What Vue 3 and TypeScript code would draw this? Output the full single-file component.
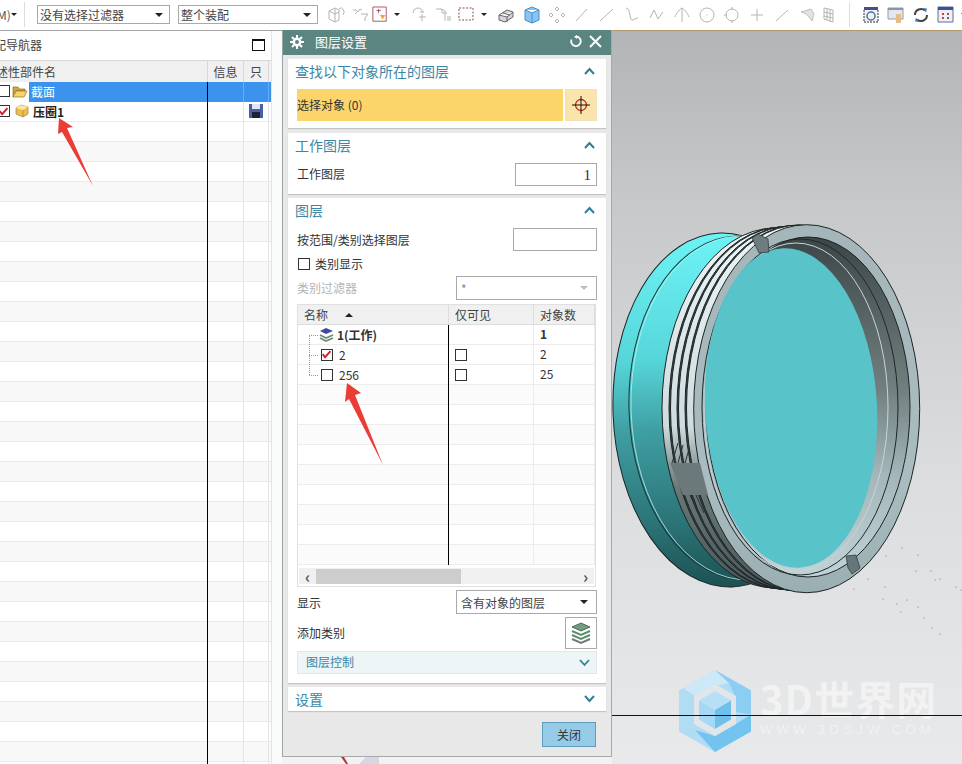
<script setup lang="ts">
const tools = [
  { w: 25, c: '#b4b4b4', d: 'M2 6l6-3 4 2v10l-4 2-6-3zM8 3v14M2 6l6 3 4-2M12 4a3 4 0 1 1 4 6' },
  { w: 24, c: '#b4b4b4', d: 'M2 5h3l2 2 2-3 2 1M10 9h7l-3 4v3M4 9l3-3' },
  { w: 16, c: '#a04c55', d: 'M1 1h15v16H1zM5 5h5M7.5 3v5', extra: 'filter' },
  { w: 17, c: '#444', d: '', caret: true },
  { w: 27, c: '#b4b4b4', d: 'M3 8a5 5 0 0 1 9-3l1 2M10 7h4M12 9v7M9 12h7' },
  { w: 23, c: '#b4b4b4', d: 'M1 4h6l3 2v10M7 4v4h5M13 11v5M15 11v5' },
  { w: 19, c: '#8a4a55', d: 'M3 3h14v12H3z', dash: true },
  { w: 20, c: '#444', d: '', caret: true },
  { w: 24, c: '#666', d: 'M2 10l8-5 6 2v5l-8 5-6-2zM2 10l8 2 6-5M10 12v5M6 8l7 2', fill: '#d8d4dc' },
  { w: 26, c: '#3e8fd8', d: 'M3 5l7-3 7 3v10l-7 3-7-3zM3 5l7 3 7-3M10 8v10', fill: '#8cc4f0' },
  { w: 25, c: '#b4b4b4', d: 'M9 2l2 2-2 2-2-2zM3 8l2 2-2 2-2-2zM15 8l2 2-2 2-2-2zM9 14l2 2-2 2-2-2z' },
  { w: 24, c: '#b4b4b4', d: 'M4 16L15 4' },
  { w: 26, c: '#b4b4b4', d: 'M3 16L16 4' },
  { w: 25, c: '#b4b4b4', d: 'M3 3c5 0 3 12 6 12s3-2 6-2' },
  { w: 26, c: '#b4b4b4', d: 'M2 13l4-8 4 9 5-7' },
  { w: 24, c: '#b4b4b4', d: 'M9 3v14M2 12c2-5 5-8 7-9 2 1 5 4 7 9' },
  { w: 26, c: '#b4b4b4', d: 'M2 10a7 7 0 1 0 14 0a7 7 0 1 0-14 0M8.500 10h1' },
  { w: 24, c: '#b4b4b4', d: 'M3 10a6 6 0 1 0 12 0a6 6 0 1 0-12 0M9 2v3M9 15v3M1 10h3' },
  { w: 26, c: '#b4b4b4', d: 'M9 4v12M3 10h12' },
  { w: 24, c: '#b4b4b4', d: 'M3 16L15 5' },
  { w: 25, c: '#c0c0c0', d: 'M3 7l10-3 3 5-2 7C10 10 7 8 3 7z', fill: '#e2e2e2' },
  { w: 20, c: '#b4b4b4', d: 'M4 3l9 2v12l-9-3zM4 7l9 2M4 11l9 2M7 4v11M10 4.500v12' }
]

const navRows = Array.from({ length: 33 })
const layerRows = [
  { name: '2', on: true, count: '2' },
  { name: '256', on: false, count: '25' }
]
const emptyLayerRows = Array.from({ length: 9 })

// specks left over from the tessellated part, lower right of the viewport
const specks = [
  [902, 548], [918, 555], [886, 556], [931, 571], [916, 571], [940, 579], [868, 579],
  [935, 580], [885, 587], [956, 587], [961, 590], [854, 589], [883, 599], [907, 600],
  [897, 604], [918, 607], [901, 612], [924, 618], [932, 628], [940, 634]
]
</script>

<template>
  <div class="page">
    <header class="toolbar">
      <span class="menu-stub">M)</span>
      <span class="caret small"></span>
      <span class="tool-sep first"></span>
      <div class="combo tb-a"><span>没有选择过滤器</span><i class="caret"></i></div>
      <div class="combo tb-b"><span>整个装配</span><i class="caret"></i></div>
      <div class="tools">
        <template v-for="(t, i) in tools" :key="i">
          <span class="tool" :style="{ width: t.w + 'px' }">
            <i v-if="t.caret" class="caret small"></i>
            <svg v-else width="18" height="20" viewBox="0 0 18 20">
              <path :d="t.d" :stroke="t.c" :fill="t.fill || 'none'" :stroke-dasharray="t.dash ? '2 1.500' : undefined" stroke-width="1" />
              <path v-if="t.extra" d="M9 10h6l-3 5z" fill="#e6a83c" />
            </svg>
          </span>
        </template>
      </div>
      <span class="tool-sep"></span>
      <div class="tools">
        <span class="tool wide">
          <svg width="20" height="20" viewBox="0 0 20 20">
            <path d="M3 2h14v3H3z" fill="#3f4f8f" />
            <path d="M3 5v12h14V5" fill="#eef1f6" stroke="#333" stroke-dasharray="2 1" />
            <circle cx="10" cy="11" r="4" fill="none" stroke="#55708f" stroke-width="1.500" />
          </svg>
        </span>
        <span class="tool wide">
          <svg width="20" height="20" viewBox="0 0 20 20">
            <path d="M2 3h15v11H2z" fill="#e3e7ee" stroke="#9a9a9a" />
            <path d="M2 3h15v2H2z" fill="#8d93a5" />
            <path d="M10 9h5v9h-5z" fill="#e3bd8a" />
          </svg>
        </span>
        <span class="tool wide">
          <svg width="20" height="20" viewBox="0 0 20 20">
            <path d="M4 10a6 6 0 0 1 10-4.500M16 10a6 6 0 0 1-10 4.500" fill="none" stroke="#444" stroke-width="2" />
            <path d="M12 3l4 .5-1 4z" fill="#3c7fc0" />
            <path d="M8 17l-4-.5 1-4z" fill="#3c7fc0" />
          </svg>
        </span>
        <span class="tool wide">
          <svg width="20" height="20" viewBox="0 0 20 20">
            <path d="M2 2h15v15H2z" fill="#eef0f7" stroke="#5b6fa5" />
            <path d="M2 2h15v3H2z" fill="#3f4f8f" />
            <path d="M6 8h2v2H6zM11 8h2v2h-2zM6 12h2v2H6zM11 12h2v2h-2z" fill="#c9413a" />
          </svg>
        </span>
        <i class="caret small tail"></i>
      </div>
    </header>

    <div class="workspace">
      <aside class="nav-wrap">
        <div class="nav">
          <div class="nav-title">
            <span class="nav-name">配导航器</span>
            <span class="max-btn"></span>
          </div>
          <div class="nav-head nav-grid">
            <span class="clip-name">述性部件名</span>
            <span>信息</span>
            <span>只</span>
            <span></span>
          </div>
          <div class="nav-row nav-grid selected">
            <div class="first-col">
              <span class="check cut"></span>
              <svg class="folder" width="16" height="14" viewBox="0 0 16 14">
                <path d="M1 3h5l1 2h6v2H4l-3 6z" fill="#d5a530" stroke="#8f7020" stroke-width=".7" />
                <path d="M1 13l3-6h11l-3 6z" fill="#f6d568" stroke="#8f7020" stroke-width=".7" />
              </svg>
              <span class="sel-name">截面</span>
            </div>
            <span class="sel-fill"></span><span class="sel-fill"></span><span class="sel-end"></span>
          </div>
          <div class="nav-row nav-grid">
            <div class="first-col">
              <span class="check cut">
                <svg width="13" height="11" viewBox="0 0 13 11"><path d="M1 5l3 4 7-8" fill="none" stroke="#c8202c" stroke-width="2.400" /></svg>
              </span>
              <svg class="cube" width="14" height="14" viewBox="0 0 14 14">
                <path d="M1 4l5-3 7 2v7l-5 3-7-3z" fill="#e9bd50" stroke="#a68432" stroke-width=".7" />
                <path d="M1 4l7 2 5-3-7-2z" fill="#f9e6a6" />
                <path d="M8 6v7" stroke="#a68432" stroke-width=".7" />
              </svg>
              <b class="part-name">压圈1</b>
            </div>
            <span></span>
            <span class="save-cell">
              <svg width="14" height="14" viewBox="0 0 14 14">
                <path d="M0 0h14v14H0z" fill="#4a5fa0" />
                <path d="M3 0h8v5H3z" fill="#dfe6f5" />
                <path d="M3 8h8v6H3z" fill="#1b2138" />
              </svg>
            </span>
            <span></span>
          </div>
          <div v-for="(_, i) in navRows" :key="i" class="nav-row nav-grid" :class="{ alt: i % 2 === 1 }">
            <div class="first-col"></div><span></span><span></span><span></span>
          </div>
        </div>
      </aside>

      <section class="dialog-wrap">
        <div class="dialog">
          <div class="dlg-title">
            <svg width="14" height="14" viewBox="0 0 14 14">
              <path d="M7 2.500a4.500 4.500 0 1 0 0 9a4.500 4.500 0 1 0 0-9zM7 5a2 2 0 1 1 0 4a2 2 0 1 1 0-4z" fill="#fff" fill-rule="evenodd" />
              <path d="M7 0v3M7 11v3M0 7h3M11 7h3M2 2l2 2M10 10l2 2M12 2l-2 2M2 12l2-2" stroke="#fff" stroke-width="2" />
            </svg>
            <span class="dlg-name">图层设置</span>
            <svg class="reset" width="13" height="13" viewBox="0 0 13 13">
              <path d="M7 1.500a4.800 4.800 0 1 1-4.500 3" fill="none" stroke="#fff" stroke-width="1.800" />
              <path d="M8 0v4L5 1.800z" fill="#fff" />
            </svg>
            <svg width="13" height="13" viewBox="0 0 13 13">
              <path d="M1 1l11 11M12 1L1 12" stroke="#fff" stroke-width="2" />
            </svg>
          </div>

          <div class="dlg-body">
            <div class="panel first-panel">
              <div class="panel-head">
                <span>查找以下对象所在的图层</span>
                <svg class="chev" width="11" height="8" viewBox="0 0 11 8"><path d="M1 7l4.500-5L10 7" fill="none" stroke="#2f7f96" stroke-width="2" /></svg>
              </div>
              <div class="pick-row">
                <div class="pick-label">选择对象 (0)</div>
                <div class="pick-btn">
                  <svg width="20" height="20" viewBox="0 0 20 20">
                    <circle cx="10" cy="10" r="5.500" fill="none" stroke="#c0281c" stroke-width="1.300" />
                    <path d="M10 1v18M1 10h18" stroke="#111" stroke-width="1" />
                  </svg>
                </div>
              </div>
            </div>

            <div class="panel work-panel">
              <div class="panel-head">
                <span>工作图层</span>
                <svg class="chev" width="11" height="8" viewBox="0 0 11 8"><path d="M1 7l4.500-5L10 7" fill="none" stroke="#2f7f96" stroke-width="2" /></svg>
              </div>
              <div class="form-row">
                <span class="lift">工作图层</span>
                <div class="input work-input">1</div>
              </div>
            </div>

            <div class="panel layer-panel">
              <div class="panel-head">
                <span>图层</span>
                <svg class="chev" width="11" height="8" viewBox="0 0 11 8"><path d="M1 7l4.500-5L10 7" fill="none" stroke="#2f7f96" stroke-width="2" /></svg>
              </div>
              <div class="form-row range-row">
                <span>按范围/类别选择图层</span>
                <div class="input range-input"></div>
              </div>
              <label class="check-row"><span class="check"></span>类别显示</label>
              <div class="form-row filter-row">
                <span class="muted lift">类别过滤器</span>
                <div class="combo dlg-combo disabled"><span>*</span><i class="caret"></i></div>
              </div>

              <div class="layer-table">
                <div class="lt-head lt-grid">
                  <span class="lt-name">名称<i class="sort"></i></span>
                  <span>仅可见</span>
                  <span>对象数</span>
                </div>
                <div class="lt-rows">
                  <span class="tree-v"></span>
                  <span class="tree-h h1"></span>
                  <span class="tree-h h2"></span>
                  <span class="tree-h h3"></span>
                  <div class="lt-row lt-grid">
                    <div class="lt-first">
                      <svg class="layers-ico" width="17" height="16" viewBox="0 0 17 16">
                        <path d="M2 4l6-3 7 3-7 3z" fill="#3d4d9a" />
                        <path d="M2 8l6 3 7-3M2 11l6 3 7-3" fill="none" stroke="#708a78" stroke-width="1.800" />
                      </svg>
                      <b>1(工作)</b>
                    </div>
                    <span></span>
                    <b class="lt-count">1</b>
                  </div>
                  <div v-for="r in layerRows" :key="r.name" class="lt-row lt-grid">
                    <div class="lt-first item">
                      <span class="check">
                        <svg v-if="r.on" width="13" height="11" viewBox="0 0 13 11"><path d="M1 5l3 4 7-8" fill="none" stroke="#c8202c" stroke-width="2.400" /></svg>
                      </span>
                      <span>{{ r.name }}</span>
                    </div>
                    <span class="vis-cell"><span class="check"></span></span>
                    <span class="lt-count">{{ r.count }}</span>
                  </div>
                  <div v-for="(_, i) in emptyLayerRows" :key="i" class="lt-row lt-grid" :class="{ alt: i % 2 === 0 }">
                    <div class="lt-first"></div><span></span><span></span>
                  </div>
                </div>
                <div class="hscroll">
                  <span class="arrow">‹</span>
                  <span class="thumb"></span>
                  <span class="arrow end">›</span>
                </div>
              </div>

              <div class="form-row show-row">
                <span>显示</span>
                <div class="combo dlg-combo"><span>含有对象的图层</span><i class="caret"></i></div>
              </div>
              <div class="form-row add-row">
                <span class="lift">添加类别</span>
                <div class="add-btn">
                  <svg width="24" height="24" viewBox="0 0 24 24">
                    <path d="M3 6l9-4 9 4-9 4z" fill="#6ea27c" stroke="#445" stroke-width=".8" />
                    <path d="M3 10l9 4 9-4M3 14l9 4 9-4" fill="none" stroke="#5a8f6a" stroke-width="2" />
                    <path d="M3 18l9 4 9-4" fill="none" stroke="#777" stroke-width="2" />
                  </svg>
                </div>
              </div>
              <div class="sub-panel">
                <span class="lift">图层控制</span>
                <svg width="11" height="8" viewBox="0 0 11 8"><path d="M1 1l4.500 5L10 1" fill="none" stroke="#2f7f96" stroke-width="1.800" /></svg>
              </div>
            </div>

            <div class="panel settings-panel">
              <div class="panel-head">
                <span>设置</span>
                <svg class="chev" width="11" height="8" viewBox="0 0 11 8"><path d="M1 1l4.500 5L10 1" fill="none" stroke="#2f7f96" stroke-width="2" /></svg>
              </div>
            </div>

            <div class="dlg-foot"><button class="close-btn">关闭</button></div>
          </div>
        </div>
        <div class="under-dialog"></div>
      </section>

      <main class="viewport">
        <svg class="model" width="350" height="734" viewBox="612 30 350 734">
          <defs>
            <linearGradient id="bodyGrad" x1="0" y1="0" x2="0" y2="1">
              <stop offset="0" stop-color="#6df3f5" />
              <stop offset=".35" stop-color="#57d6da" />
              <stop offset=".55" stop-color="#3f9fa2" />
              <stop offset=".8" stop-color="#2c7679" />
              <stop offset="1" stop-color="#1c5153" />
            </linearGradient>
            <linearGradient id="threadLight" x1="0" y1="0" x2="0" y2="1">
              <stop offset="0" stop-color="#edf4f6" />
              <stop offset=".55" stop-color="#cfdcdf" />
              <stop offset=".72" stop-color="#6a787a" />
              <stop offset="1" stop-color="#4a5658" />
            </linearGradient>
            <linearGradient id="wallGrad" x1="0" y1="0" x2="0" y2="1">
              <stop offset="0" stop-color="#3c4648" />
              <stop offset=".45" stop-color="#71807f" />
              <stop offset=".7" stop-color="#a4b6ba" />
              <stop offset="1" stop-color="#c2d3d7" />
            </linearGradient>
            <linearGradient id="faceGrad" x1="0" y1="0" x2="0" y2="1">
              <stop offset="0" stop-color="#a5b6ba" />
              <stop offset=".7" stop-color="#a9bcc0" />
              <stop offset="1" stop-color="#9bafb3" />
            </linearGradient>
          </defs>
          <g stroke="#1c2424" stroke-width="1">
            <ellipse cx="726" cy="410" rx="113" ry="177" fill="url(#bodyGrad)" transform="rotate(-2 726 410)" />
            <ellipse cx="742" cy="408" rx="113" ry="172" fill="none" stroke="#16393a" transform="rotate(-2 742 408)" />
            <ellipse cx="744" cy="408" rx="113" ry="172" fill="none" stroke="#b8f0f0" stroke-width=".8" transform="rotate(-2 744 408)" />
            <ellipse cx="775" cy="408" rx="113" ry="180" fill="url(#threadLight)" />
            <ellipse cx="782" cy="408" rx="113" ry="181" fill="#39474a" />
            <ellipse cx="783.500" cy="408" rx="113" ry="181" fill="url(#threadLight)" />
            <ellipse cx="790" cy="408" rx="113" ry="182" fill="#39474a" />
            <ellipse cx="791.500" cy="408" rx="113" ry="182" fill="url(#threadLight)" />
            <ellipse cx="798" cy="408" rx="113" ry="183" fill="#39474a" />
            <ellipse cx="799.500" cy="408" rx="113" ry="183" fill="url(#threadLight)" />
            <ellipse cx="806.700" cy="408.700" rx="113" ry="184" fill="url(#faceGrad)" />
            <ellipse cx="808" cy="407" rx="102" ry="170" fill="url(#wallGrad)" />
          </g>
          <ellipse cx="800" cy="407" rx="98" ry="168" fill="none" stroke="#1f2829" stroke-width="1" />
          <ellipse cx="796" cy="407" rx="92" ry="164" fill="none" stroke="#c7d5d8" stroke-width="1" />
          <ellipse cx="791" cy="408" rx="86" ry="160" fill="#58c3c9" transform="rotate(-3 791 408)" />
          <path d="M670 463h30l8 32h-25z" fill="#6b797b" />
          <path d="M672 463l6-20M678 463l5-18M685 463l4-14M684 495l10 26M690 495l10 22M696 495l8 18" stroke="#2a3333" stroke-width="1" fill="none" />
          <path d="M752 238l6-4 10 5 1 13-10 1z" fill="#6d7c7e" stroke="#2a3333" stroke-width=".7" />
          <path d="M846 556l10-1 4 13-8 6-4-6z" fill="#66767a" stroke="#2a3333" stroke-width=".7" />
          <circle v-for="(s, i) in specks" :key="i" :cx="s[0]" :cy="s[1]" r=".6" fill="#6d7578" />
        </svg>
        <div class="watermark">
          <svg width="72" height="82" viewBox="0 0 72 82">
            <path d="M36 0l36 20.500v41L36 82 0 61.500v-41z" fill="#b0dcf4" />
            <path d="M36 0L4 18l12 8 20-10 14-3z" fill="#cde8f7" />
            <path d="M36 0l36 20.500v24L57 42V28L50 13z" fill="#8ccdf2" />
            <path d="M36 82l36-20.500v-17L57 54 36 66 16 60z" fill="#72c4ee" />
            <path d="M36 14l21 12v28L36 66 15 54V26z" fill="#e3e6e8" />
            <path d="M36 21l16 9.500-16 9.500-16-9.500z" fill="#b7e0f6" />
            <path d="M20 30.500l16 9.500v19l-16-9.500z" fill="#a4d8f4" />
            <path d="M52 30.500L36 40v19l16-9.500z" fill="#6fc1ec" />
          </svg>
          <div class="wm-text">
            <span class="wm-big">3D世界网</span>
            <span class="wm-small">WWW.3DSJW.COM</span>
          </div>
        </div>
        <span class="axis-line"></span>
      </main>
    </div>

    <!-- red callouts and the clipped sketch bit under the dialog -->
    <svg class="callouts" width="962" height="764" viewBox="0 0 962 764">
      <path d="M59 118l14 9-6 1 26 58-31-54-4 2z" fill="#ea3d36" />
      <path d="M347 383l14 10-6 2 28 70-34-66-4 3z" fill="#ea3d36" />
      <path d="M341 757l5 7h2l-4-7z" fill="#b8333a" />
      <path d="M359 764l7-7h13v7z" fill="#d5d7e2" />
    </svg>
  </div>
</template>

<style scoped>
.page {
  position: relative;
  width: 962px;
  height: 764px;
  overflow: hidden;
  display: flex;
  flex-direction: column;
  background: #f2f2f2;
  font-family: "Noto Sans CJK SC", "Liberation Sans", sans-serif;
  font-size: 12px;
  color: #333;
}

.toolbar {
  height: 31px;
  flex: none;
  box-sizing: border-box;
  background: #fff;
  border-bottom: 1px solid #a4a4a4;
  padding-bottom: 1px;
  display: flex;
  align-items: center;
  overflow: hidden;
}

.menu-stub {
  margin-left: -3px;
  width: 14px;
  color: #555;
  flex: none;
}

.caret {
  display: inline-block;
  flex: none;
  width: 0;
  height: 0;
  border-left: 4px solid transparent;
  border-right: 4px solid transparent;
  border-top: 4px solid #222;
}

.caret.small {
  border-left-width: 3px;
  border-right-width: 3px;
  border-top-width: 3px;
}

.caret.tail {
  margin-left: 3px;
}

.tool-sep {
  width: 1px;
  height: 25px;
  flex: none;
  background: #ddd;
  margin: 0 8px 0 10px;
}

.tool-sep.first {
  margin: 0 12px 0 7px;
}

.combo {
  height: 19px;
  box-sizing: border-box;
  border: 1px solid #a9a9a9;
  background: #fff;
  display: flex;
  align-items: center;
  justify-content: space-between;
  padding: 0 6px 0 2px;
  color: #444;
}

.tb-a {
  width: 133px;
  flex: none;
  margin-right: 8px;
}

.tb-b {
  width: 140px;
  flex: none;
  margin-right: 5px;
}

.tools {
  display: flex;
  align-items: center;
  flex: none;
}

.tool {
  display: flex;
  justify-content: center;
  align-items: center;
  height: 24px;
  flex: none;
}

.tool.wide {
  width: 25px;
}

.workspace {
  flex: 1;
  min-height: 0;
  display: flex;
  margin-top: -1px;
}

.nav-wrap {
  width: 282px;
  flex: none;
  margin-top: 1px;
  background: #fafafa;
}

.nav {
  width: 272px;
  height: 100%;
  overflow: hidden;
  background: #fff;
  border-right: 1px solid #e4e4e4;
  box-sizing: border-box;
}

.nav-title {
  height: 29px;
  display: flex;
  align-items: center;
  justify-content: space-between;
  padding-right: 6px;
  padding-bottom: 2px;
  box-sizing: border-box;
}

.nav-name {
  margin-left: -6px;
  color: #444;
}

.max-btn {
  width: 11px;
  height: 9px;
  border: 1px solid #111;
  border-top-width: 2px;
}

.nav-grid {
  display: grid;
  grid-template-columns: 208px 36px 25px 3px;
}

.nav-head {
  height: 22px;
  box-sizing: border-box;
  background: #f0f0f0;
  border-top: 1px solid #d6d6d6;
  align-items: center;
  color: #444;
}

.nav-head > span {
  height: 100%;
  display: flex;
  align-items: center;
  justify-content: center;
  border-right: 1px solid #d8d8d8;
}

.clip-name {
  justify-content: flex-start !important;
  margin-left: -4px;
}

.nav-row {
  height: 20px;
  box-sizing: border-box;
  border-bottom: 1px solid #ebebeb;
}

.nav-row.alt {
  background: #f8f8f8;
}

.nav-row > span {
  border-right: 1px solid #e4e4e4;
}

.first-col {
  border-right: 1px solid #000;
  display: flex;
  align-items: center;
  height: 20px;
  padding-bottom: 2px;
  box-sizing: border-box;
}

.selected {
  background: linear-gradient(to right, #fff 29px, #3b93ee 29px);
  border-bottom: none;
  color: #fff;
}

.sel-name {
  margin-left: 2px;
}

.sel-fill {
  background: #3b93ee;
  border-right-color: #6aaef2 !important;
}

.sel-end {
  background: #3b93ee;
  border-right: none !important;
}

.check {
  width: 10px;
  height: 10px;
  flex: none;
  box-sizing: content-box;
  border: 1px solid #333;
  background: #fff;
  display: inline-flex;
  align-items: center;
  justify-content: center;
  overflow: visible;
}

.check.cut {
  margin-left: -2px;
}

.folder {
  margin-left: 2px;
  margin-right: 1px;
  flex: none;
}

.cube {
  margin-left: 5px;
  flex: none;
}

.part-name {
  margin-left: 4px;
  color: #222;
}

.save-cell {
  display: flex;
  align-items: center;
  justify-content: center;
  padding-bottom: 2px;
}

.dialog-wrap {
  width: 330px;
  flex: none;
  display: flex;
  flex-direction: column;
}

.dialog {
  height: 727px;
  flex: none;
  box-sizing: border-box;
  display: flex;
  flex-direction: column;
  background: #e8e8e8;
  border-left: 1px solid #9aa5a3;
  border-right: 1px solid #a8a8a8;
  border-bottom: 1px solid #a8a8a8;
}

.dlg-title {
  height: 25px;
  flex: none;
  background: #5b8580;
  display: flex;
  align-items: center;
  gap: 6px;
  padding: 0 9px 2px 7px;
  box-sizing: border-box;
  color: #fff;
  font-size: 13px;
}

.dlg-name {
  flex: 1;
  margin-left: 5px;
}

.reset {
  margin-right: 1px;
}

.dlg-body {
  flex: 1;
  display: flex;
  flex-direction: column;
  padding: 4px 5px 0;
  gap: 5px;
}

.panel {
  background: #fff;
  padding: 0 9px;
  box-sizing: border-box;
  box-shadow: 0 1px 1px #c4c4c4;
}

.panel-head {
  height: 26px;
  box-sizing: border-box;
  padding-bottom: 2px;
  display: flex;
  align-items: center;
  justify-content: space-between;
  padding-right: 2px;
  margin-left: -2px;
  color: #3a87a6;
  font-size: 14px;
}

.chev {
  flex: none;
}

.lift {
  position: relative;
  top: -1px;
}

.first-panel {
  height: 69px;
}

.pick-row {
  display: flex;
  gap: 2px;
  margin-top: 4px;
}

.pick-label {
  flex: 1;
  height: 32px;
  padding-bottom: 2px;
  box-sizing: border-box;
  background: #fcd56a;
  display: flex;
  align-items: center;
  color: #333;
}

.pick-btn {
  width: 32px;
  height: 32px;
  box-sizing: border-box;
  background: #f9e4ac;
  border: 1px solid #f2e2b8;
  display: flex;
  align-items: center;
  justify-content: center;
}

.work-panel {
  height: 61px;
}

.form-row {
  display: flex;
  align-items: center;
  justify-content: space-between;
}

.work-panel .form-row {
  margin-top: 4px;
}

.input {
  box-sizing: border-box;
  height: 23px;
  border: 1px solid #aaa;
  background: #fff;
  text-align: right;
  padding: 2px 5px 0;
  font-family: "Liberation Serif", serif;
  font-size: 15px;
  line-height: 18px;
}

.work-input {
  width: 82px;
}

.range-input {
  width: 84px;
}

.layer-panel {
  height: 485px;
  margin-top: -1px;
}

.range-row {
  margin-top: 4px;
}

.check-row {
  display: flex;
  align-items: center;
  gap: 5px;
  height: 19px;
  margin-top: 3px;
  margin-left: 1px;
}

.filter-row {
  margin-top: 3px;
}

.muted {
  color: #b4b4b4;
}

.dlg-combo {
  width: 141px;
  height: 24px;
  padding: 0 8px 0 4px;
}

.dlg-combo.disabled {
  color: #888;
}

.dlg-combo.disabled .caret {
  border-top-color: #bbb;
}

.layer-table {
  margin-top: 4px;
  width: 299px;
  height: 283px;
  box-sizing: border-box;
  border: 1px solid #e0e0e0;
  display: flex;
  flex-direction: column;
}

.lt-grid {
  display: grid;
  grid-template-columns: 151px 85px 1fr;
}

.lt-head {
  height: 20px;
  flex: none;
  background: #f0f0f0;
  border-bottom: 1px solid #dcdcdc;
  box-sizing: border-box;
  align-items: center;
  color: #444;
}

.lt-head > span {
  height: 100%;
  display: flex;
  align-items: center;
  padding-left: 6px;
  box-sizing: border-box;
  border-right: 1px solid #ddd;
}

.sort {
  margin-left: 17px;
  width: 0;
  height: 0;
  border-left: 4px solid transparent;
  border-right: 4px solid transparent;
  border-bottom: 4px solid #222;
}

.lt-rows {
  position: relative;
  flex: 1;
}

.lt-row {
  height: 20px;
  box-sizing: border-box;
  border-bottom: 1px solid #ececec;
}

.lt-row.alt {
  background: #fbfbfb;
}

.lt-first {
  border-right: 1px solid #000;
  display: flex;
  align-items: center;
  padding-left: 20px;
  padding-bottom: 1px;
  height: 20px;
  box-sizing: border-box;
}

.lt-first.item {
  padding-left: 23px;
  gap: 6px;
}

.lt-first b {
  margin-left: 2px;
}

.lt-row > span,
.lt-row > b {
  border-right: 1px solid #ececec;
}

.vis-cell {
  display: flex;
  align-items: center;
  padding-left: 6px;
}

.lt-count {
  padding-left: 6px;
  line-height: 18px;
}

.tree-v {
  position: absolute;
  left: 11px;
  top: 10px;
  height: 40px;
  border-left: 1px dotted #999;
}

.tree-h {
  position: absolute;
  left: 11px;
  width: 9px;
  border-top: 1px dotted #999;
}

.h1 {
  top: 10px;
}

.h2 {
  top: 30px;
}

.h3 {
  top: 50px;
}

.hscroll {
  flex: none;
  height: 16px;
  margin: 0 1px 2px;
  background: #f0f0f0;
  display: flex;
  align-items: center;
  color: #555;
  font-size: 16px;
  font-weight: bold;
  line-height: 14px;
}

.arrow {
  width: 17px;
  text-align: center;
}

.arrow.end {
  margin-left: auto;
}

.thumb {
  width: 145px;
  height: 15px;
  background: #cdcdcd;
}

.show-row {
  margin-top: 3px;
}

.add-row {
  margin-top: 3px;
  height: 32px;
}

.add-btn {
  width: 32px;
  height: 32px;
  box-sizing: border-box;
  border: 1px solid #aaa;
  display: flex;
  align-items: center;
  justify-content: center;
}

.sub-panel {
  margin-top: 2px;
  height: 23px;
  box-sizing: border-box;
  background: #eef5f7;
  border: 1px solid #e2e8ea;
  display: flex;
  align-items: center;
  justify-content: space-between;
  padding: 0 6px 0 8px;
  color: #3a87a6;
}

.settings-panel {
  height: 24px;
  margin-top: -1px;
}

.dlg-foot {
  display: flex;
  justify-content: flex-end;
  padding: 6px 10px 0 0;
}

.close-btn {
  width: 54px;
  height: 25px;
  background: #96cbe8;
  border: 1px solid #5e9cc0;
  color: #333;
  font-family: inherit;
  font-size: 12px;
  padding: 0;
}

.under-dialog {
  flex: 1;
  background: #f2f2f2;
}

.viewport {
  position: relative;
  flex: 1;
  min-width: 0;
  background: linear-gradient(to bottom, #b2b4b5 0, #c8c9cb 180px, #dcddde 450px, #e8e9ea 100%);
  border-top: 1px solid #b39a6c;
  box-sizing: border-box;
  overflow: hidden;
}

.model {
  position: absolute;
  left: 0;
  top: -1px;
}

.axis-line {
  position: absolute;
  left: 0;
  right: 0;
  top: 684px;
  height: 1px;
  background: #111;
}

.watermark {
  position: absolute;
  left: 67px;
  top: 639px;
  display: flex;
  gap: 9px;
  align-items: flex-start;
}

.wm-text {
  display: flex;
  flex-direction: column;
  padding-top: 8px;
}

.wm-big {
  color: rgba(255, 255, 255, 0.5);
  font-size: 40px;
  line-height: 40px;
  font-weight: 700;
  white-space: nowrap;
  letter-spacing: 1px;
}

.wm-small {
  margin-top: 4px;
  color: rgba(255, 255, 255, 0.45);
  font-family: "Liberation Sans", sans-serif;
  font-size: 13px;
  line-height: 16px;
  letter-spacing: 4.500px;
  white-space: nowrap;
}

.callouts {
  position: absolute;
  left: 0;
  top: 0;
  pointer-events: none;
}
</style>
